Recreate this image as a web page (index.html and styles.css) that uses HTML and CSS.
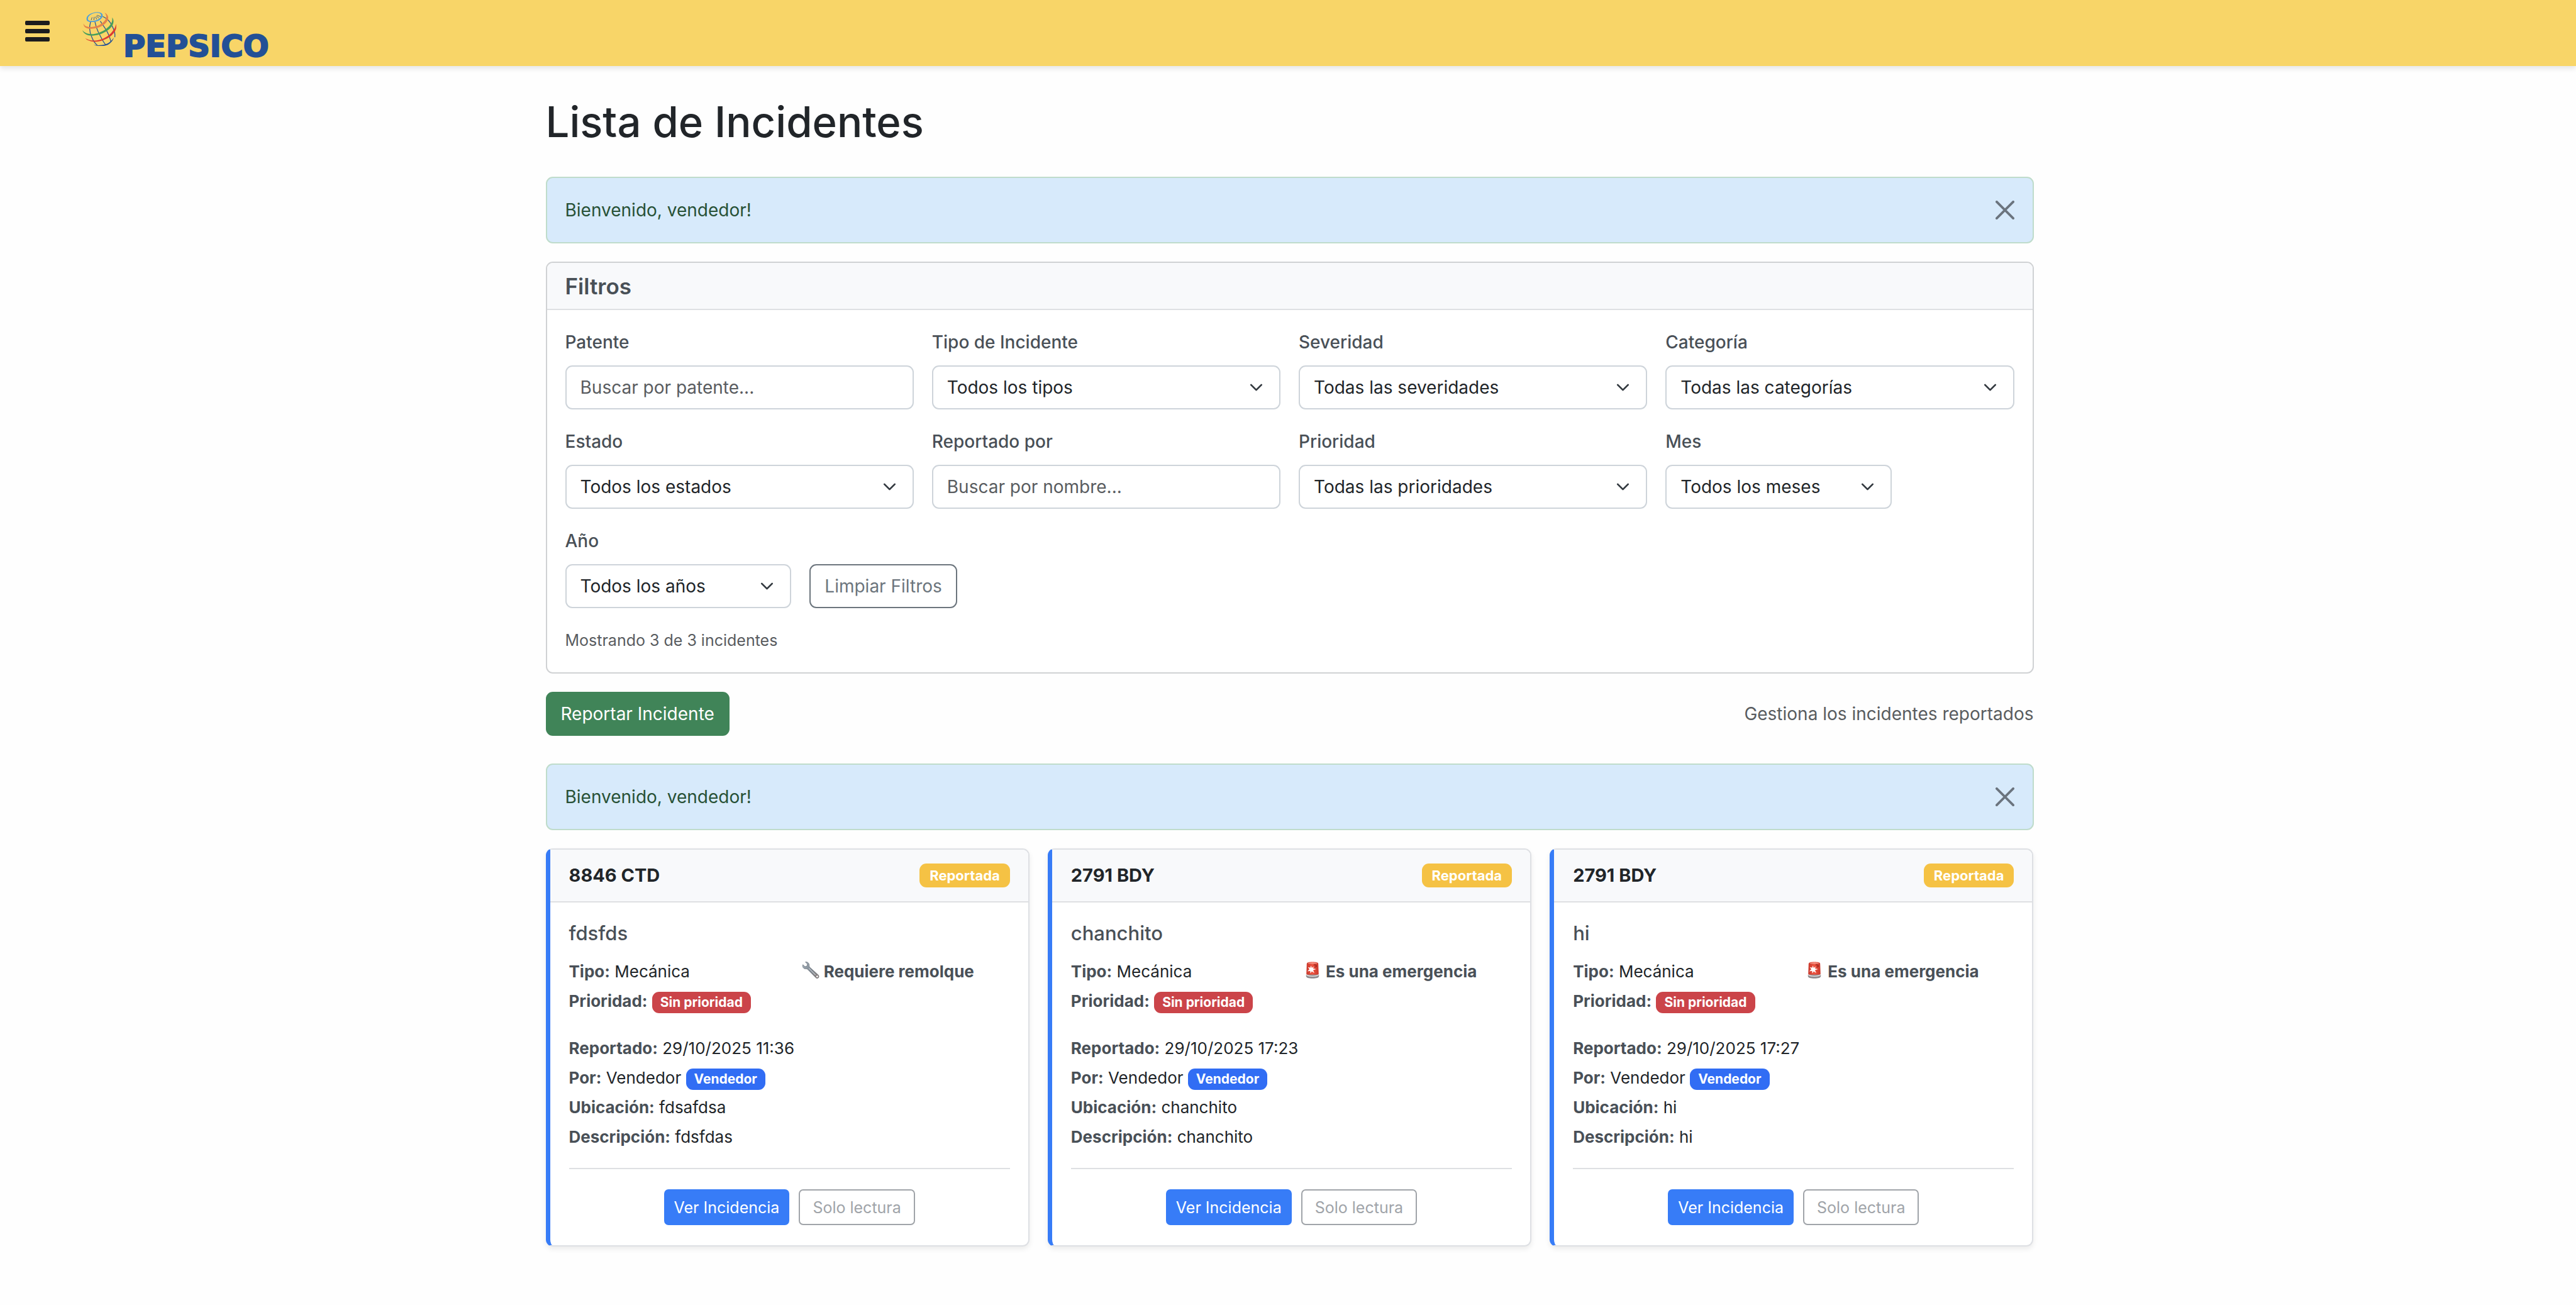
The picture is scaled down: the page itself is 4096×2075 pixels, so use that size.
FILE: index.html
```html
<!DOCTYPE html>
<html lang="es">
<head>
<meta charset="utf-8">
<meta name="viewport" content="width=device-width, initial-scale=1">
<title>Lista de Incidentes</title>
<link rel="stylesheet" href="styles.css">
</head>
<body>
<svg class="defs" aria-hidden="true">
  <defs>
    <linearGradient id="steel" x1="0" y1="0" x2="1" y2="1">
      <stop offset="0" stop-color="#a9b6c2"/><stop offset=".5" stop-color="#7d868f"/><stop offset="1" stop-color="#8a7a75"/>
    </linearGradient>
    <linearGradient id="lamp" x1="0" y1="0" x2="1" y2="0">
      <stop offset="0" stop-color="#c8382c"/><stop offset=".5" stop-color="#ef5440"/><stop offset="1" stop-color="#c8382c"/>
    </linearGradient>
    <symbol id="close" viewBox="0 0 16 16">
      <path d="M1 1l14 14M15 1L1 15" fill="none" stroke="#6b747e" stroke-width="2" stroke-linecap="round"/>
    </symbol>
    <symbol id="wrench" viewBox="0 0 29 29">
      <path d="M5.500 0.800L9 4.200L8.200 7.600L4.800 8.600L1.200 5.200C-.2 9 2.400 12.800 6.600 12.400C7.800 12.300 8.800 12.800 9.800 13.800L22.600 26.800C24 28.600 26.400 29 27.800 27.600C29.200 26 28.600 23.800 27 22.400L13.600 10.200C12.500 9.200 12 8.200 12.100 7C12.300 3 9.400 0 5.500 .8Z" fill="url(#steel)" stroke="#6d757d" stroke-width=".8"/>
      <circle cx="25.600" cy="25.400" r="1.500" fill="#fff"/>
      <path d="M11.500 11.500L23 23" stroke="#c6ced6" stroke-width="1.200"/>
    </symbol>
    <symbol id="siren" viewBox="0 0 22 28">
      <path d="M.8 22L1.500 3.500C1.700 1.300 5 .5 11 .5S20.300 1.300 20.500 3.500L21.200 22Z" fill="url(#lamp)"/>
      <ellipse cx="11" cy="2.600" rx="7.500" ry="1.200" fill="#f39284"/>
      <path d="M.4 21.500H21.600V24C21.600 26.500 17 27.700 11 27.700S.4 26.500 .4 24Z" fill="#8e8a8d"/>
      <path d="M.8 20.500C5 24.300 17 24.300 21.200 20.500V22.500C17 25.600 5 25.600 .8 22.500Z" fill="#dedcdd"/>
      <path d="M8.500 6.500L9.800 10.300L13 8L12 11.500L17 12.500L12 14L14 19L9.800 16L7.500 19.500L7.200 15.400L2.500 16L5.800 12.700L3.500 9L7.300 10.200Z" fill="#fff"/>
      <path d="M13 5.500C16 5 17.500 6 17.500 8L15 9" fill="none" stroke="#8f1f1a" stroke-width="1.200"/>
    </symbol>
  </defs>
</svg>

<header class="navbar">
  <button class="menu" type="button" aria-label="Menú">
    <span></span><span></span><span></span>
  </button>
  <a class="brand" href="#">
    <svg class="globe" viewBox="38 32 178 178" aria-hidden="true">
      <g fill="none" stroke="#235096" stroke-width="4">
        <path d="M81 84C74 108 76 138 85 158C91 174 97 192 116 206"/>
        <path d="M104 84C109 106 117 130 127 148C137 168 146 188 160 204"/>
        <path d="M132 80C141 96 151 108 161 124C173 142 182 166 188 190"/>
        <path d="M145 56C164 64 182 80 193 104C204 124 211 146 208 164"/>
        <path d="M84 75L89 60M98 75L100 58M113 71L107 57M125 65L111 53M137 58L115 49" stroke-width="3"/>
      </g>
      <path fill="#4a9fdc" fill-rule="evenodd" d="M60 73C55 52 84 34 116 33C140 33 150 46 142 60C132 78 108 86 84 85C70 84 62 80 60 73ZM67 69C68 77 76 79 88 79C108 78 128 70 134 58C140 45 134 37 114 36C88 37 66 52 67 69Z"/>
      <path fill="#e5834a" d="M44 92C42 112 62 121 85 120C125 119 160 100 171 75C178 58 170 42 154 36C165 48 166 60 160 70C148 92 118 110 85 111C62 111 48 106 44 92Z"/>
      <path fill="#469e5c" d="M38 128C45 150 70 159 98 156C145 151 185 125 198 97C204 82 201 70 194 61C196 78 193 87 186 96C169 122 130 144 95 148C68 150 48 142 38 128Z"/>
      <path fill="#dc3a31" d="M53 170C65 185 95 191 120 187C165 180 205 152 214 122C216 112 216 102 213 95C213 112 204 124 194 136C175 160 145 177 115 181C90 184 68 180 53 170Z"/>
      <path fill="#235096" d="M96 204C120 213 150 212 167 206C184 199 197 184 203 166C192 182 178 195 160 201C140 207 118 208 96 204Z"/>
    </svg>
    <span class="wordmark">PEPSICO</span>
  </a>
</header>

<main class="page">
  <h1>Lista de Incidentes</h1>

  <div class="alert" role="alert">
    <span>Bienvenido, vendedor!</span>
    <button class="close" type="button" aria-label="Cerrar"><svg><use href="#close"/></svg></button>
  </div>

  <section class="panel">
    <h2>Filtros</h2>
    <form class="filters">
      <div class="field"><label for="patente">Patente</label><input id="patente" type="text" placeholder="Buscar por patente..."></div>
      <div class="field"><label for="tipo">Tipo de Incidente</label><select id="tipo"><option>Todos los tipos</option></select></div>
      <div class="field"><label for="severidad">Severidad</label><select id="severidad"><option>Todas las severidades</option></select></div>
      <div class="field"><label for="categoria">Categoría</label><select id="categoria"><option>Todas las categorías</option></select></div>
      <div class="field"><label for="estado">Estado</label><select id="estado"><option>Todos los estados</option></select></div>
      <div class="field"><label for="reportado">Reportado por</label><input id="reportado" type="text" placeholder="Buscar por nombre..."></div>
      <div class="field"><label for="prioridad">Prioridad</label><select id="prioridad"><option>Todas las prioridades</option></select></div>
      <div class="field narrow"><label for="mes">Mes</label><select id="mes"><option>Todos los meses</option></select></div>
      <div class="field narrow first"><label for="anio">Año</label><select id="anio"><option>Todos los años</option></select></div>
      <div class="reset"><button class="btn outline" type="reset">Limpiar Filtros</button></div>
      <p class="count">Mostrando 3 de 3 incidentes</p>
    </form>
  </section>

  <div class="toolbar">
    <button class="btn success" type="button">Reportar Incidente</button>
    <span class="muted">Gestiona los incidentes reportados</span>
  </div>

  <div class="alert" role="alert">
    <span>Bienvenido, vendedor!</span>
    <button class="close" type="button" aria-label="Cerrar"><svg><use href="#close"/></svg></button>
  </div>

  <div class="cards">
    <article class="card">
      <header><h3>8846 CTD</h3><span class="badge status">Reportada</span></header>
      <div class="card-body">
        <h4>fdsfds</h4>
        <div class="summary">
          <div class="lines">
            <p><strong>Tipo:</strong> Mecánica</p>
            <p><strong>Prioridad:</strong> <span class="badge small danger">Sin prioridad</span></p>
          </div>
          <p class="flag"><svg><use href="#wrench"/></svg><strong>Requiere remolque</strong></p>
        </div>
        <div class="lines">
          <p><strong>Reportado:</strong> 29/10/2025 11:36</p>
          <p><strong>Por:</strong> Vendedor <span class="badge small role">Vendedor</span></p>
          <p><strong>Ubicación:</strong> fdsafdsa</p>
          <p><strong>Descripción:</strong> fdsfdas</p>
        </div>
        <footer><button class="btn sm primary" type="button">Ver Incidencia</button><button class="btn sm readonly" type="button" disabled>Solo lectura</button></footer>
      </div>
    </article>

    <article class="card">
      <header><h3>2791 BDY</h3><span class="badge status">Reportada</span></header>
      <div class="card-body">
        <h4>chanchito</h4>
        <div class="summary">
          <div class="lines">
            <p><strong>Tipo:</strong> Mecánica</p>
            <p><strong>Prioridad:</strong> <span class="badge small danger">Sin prioridad</span></p>
          </div>
          <p class="flag"><svg><use href="#siren"/></svg><strong>Es una emergencia</strong></p>
        </div>
        <div class="lines">
          <p><strong>Reportado:</strong> 29/10/2025 17:23</p>
          <p><strong>Por:</strong> Vendedor <span class="badge small role">Vendedor</span></p>
          <p><strong>Ubicación:</strong> chanchito</p>
          <p><strong>Descripción:</strong> chanchito</p>
        </div>
        <footer><button class="btn sm primary" type="button">Ver Incidencia</button><button class="btn sm readonly" type="button" disabled>Solo lectura</button></footer>
      </div>
    </article>

    <article class="card">
      <header><h3>2791 BDY</h3><span class="badge status">Reportada</span></header>
      <div class="card-body">
        <h4>hi</h4>
        <div class="summary">
          <div class="lines">
            <p><strong>Tipo:</strong> Mecánica</p>
            <p><strong>Prioridad:</strong> <span class="badge small danger">Sin prioridad</span></p>
          </div>
          <p class="flag"><svg><use href="#siren"/></svg><strong>Es una emergencia</strong></p>
        </div>
        <div class="lines">
          <p><strong>Reportado:</strong> 29/10/2025 17:27</p>
          <p><strong>Por:</strong> Vendedor <span class="badge small role">Vendedor</span></p>
          <p><strong>Ubicación:</strong> hi</p>
          <p><strong>Descripción:</strong> hi</p>
        </div>
        <footer><button class="btn sm primary" type="button">Ver Incidencia</button><button class="btn sm readonly" type="button" disabled>Solo lectura</button></footer>
      </div>
    </article>
  </div>
</main>
</body>
</html>
```

FILE: styles.css
```css
* { box-sizing: border-box; }

body {
  margin: 0;
  background: #fefefe;
  color: #212529;
  font-family: Inter, "Liberation Sans", sans-serif;
  font-size: 28px;
  line-height: 44px;
}

h1, h2, h3, h4, p { margin: 0; }
button, input, select { font: inherit; }
.defs { position: absolute; width: 0; height: 0; }

/* Top bar */
.navbar {
  display: flex;
  align-items: center;
  gap: 52px;
  height: 105px;
  padding: 0 40px;
  background: #f8d568;
  box-shadow: 0 4px 8px rgba(0, 0, 0, .1);
}
.menu {
  display: flex;
  flex-direction: column;
  gap: 6px;
  width: 39px;
  margin-bottom: 6px;
  padding: 0;
  border: 0;
  background: none;
}
.menu span { height: 7px; border-radius: 2px; background: #1c1c1e; }
.brand { display: flex; gap: 11px; padding-top: 14px; color: #235096; text-decoration: none; }
.globe { width: 54px; height: 54px; }
.wordmark {
  padding-top: 27px;
  font-family: "DejaVu Sans", sans-serif;
  font-size: 48px;
  font-weight: 700;
  line-height: 54px;
  -webkit-text-stroke: 2px #235096;
}

/* Page */
.page {
  max-width: 2421px;
  margin: 0 auto;
  padding: 45px 25px 88px 30px;
}
h1 { margin-bottom: 43px; font-size: 67px; font-weight: 500; line-height: 88px; }

.alert {
  display: flex;
  justify-content: space-between;
  align-items: center;
  margin-bottom: 29px;
  padding: 29px;
  border: 2px solid #bfdccb;
  border-radius: 11px;
  background: #d7eafb;
  color: #275136;
}
.close { display: flex; padding: 0; border: 0; background: none; }
.close svg { width: 30px; height: 30px; }

/* Filters */
.panel { border: 2px solid #d0d2d4; border-radius: 11px; background: #fff; }
.panel h2 {
  padding: 15px 29px 14px;
  border-bottom: 2px solid #dee0e3;
  border-radius: 9px 9px 0 0;
  background: #f8f9fb;
  color: #495057;
  font-size: 35px;
  font-weight: 600;
}
.filters {
  display: grid;
  grid-template-columns: repeat(12, 1fr);
  gap: 29px;
  padding: 29px;
}
.field { display: flex; flex-direction: column; grid-column: span 3; gap: 15px; }
.field.narrow { grid-column: span 2; }
.field.first { grid-column: 1 / span 2; }
.field label { color: #495057; font-weight: 500; }
.field input, .field select {
  width: 100%;
  height: 70px;
  padding: 0 22px;
  border: 2px solid #ced4da;
  border-radius: 11px;
  background-color: #fff;
  color: #212529;
}
.field select {
  appearance: none;
  background-image: url("data:image/svg+xml,%3Csvg xmlns='http://www.w3.org/2000/svg' viewBox='0 0 16 16'%3E%3Cpath fill='none' stroke='%23343a40' stroke-linecap='round' stroke-linejoin='round' stroke-width='2' d='m2 5 6 6 6-6'/%3E%3C/svg%3E");
  background-repeat: no-repeat;
  background-position: right 22px center;
  background-size: 29px 22px;
}
.field input::placeholder { color: #595c5f; opacity: 1; }
.reset { grid-column: span 4; align-self: end; }
.count { grid-column: 1 / -1; color: #595c5f; font-size: 25px; }

/* Buttons */
.btn {
  height: 70px;
  padding: 0 22px;
  border: 2px solid;
  border-radius: 11px;
  white-space: nowrap;
}
.outline { display: block; border-color: #6c757d; background: #fff; color: #6c757d; }
.success { border-color: #408458; background: #408458; color: #fff; }
.sm { height: 57px; padding: 0 14px; border-radius: 7px; font-size: 25px; }
.primary { border-color: #377cf7; background: #377cf7; color: #fff; }
.readonly { padding: 0 20px; border-color: #a0a4a9; background: #fff; color: #a0a4a9; }

.toolbar {
  display: flex;
  justify-content: space-between;
  align-items: center;
  margin: 29px 0 44px;
}
.muted { color: #595c5f; }

/* Incident cards */
.cards { display: grid; grid-template-columns: repeat(3, 1fr); gap: 29px; }
.card {
  border: 2px solid #dee0e4;
  border-left: 7px solid #377cf7;
  border-radius: 11px;
  background: #fff;
  box-shadow: 0 4px 8px rgba(0, 0, 0, .08);
}
.card header {
  display: flex;
  justify-content: space-between;
  align-items: center;
  height: 84px;
  padding: 0 29px 0 30px;
  border-bottom: 2px solid #dee0e3;
  border-radius: 0 9px 0 0;
  background: #f8f9fb;
}
.card h3 { font-size: 29px; font-weight: 700; }
.card-body { padding: 29px 29px 32px 30px; font-size: 26px; line-height: 40px; }
.card h4 { margin-bottom: 21px; color: #495057; font-size: 31px; font-weight: 500; line-height: 40px; }
.card strong { color: #495057; font-weight: 700; }
.summary { display: grid; grid-template-columns: 1fr 1fr; gap: 29px; margin-bottom: 35px; }
.lines { display: grid; gap: 7px; }
.lines p { height: 40px; }
.flag { display: flex; gap: 6px; height: 40px; padding-left: 4px; }
.flag svg { width: 30px; height: 27px; margin-top: 4px; }

.badge {
  display: inline-block;
  padding: 0 16px;
  border-radius: 11px;
  color: #fff;
  font-size: 22px;
  font-weight: 700;
  line-height: 38px;
}
.badge.small { padding: 0 13px; font-size: 21px; line-height: 34px; }
.status { background: #f5c244; }
.danger { background: #cb4449; }
.role { background: #316df4; }

.card footer {
  display: flex;
  justify-content: center;
  gap: 15px;
  margin-top: 29px;
  padding-top: 32px;
  border-top: 2px solid #dee0e3;
}
```
